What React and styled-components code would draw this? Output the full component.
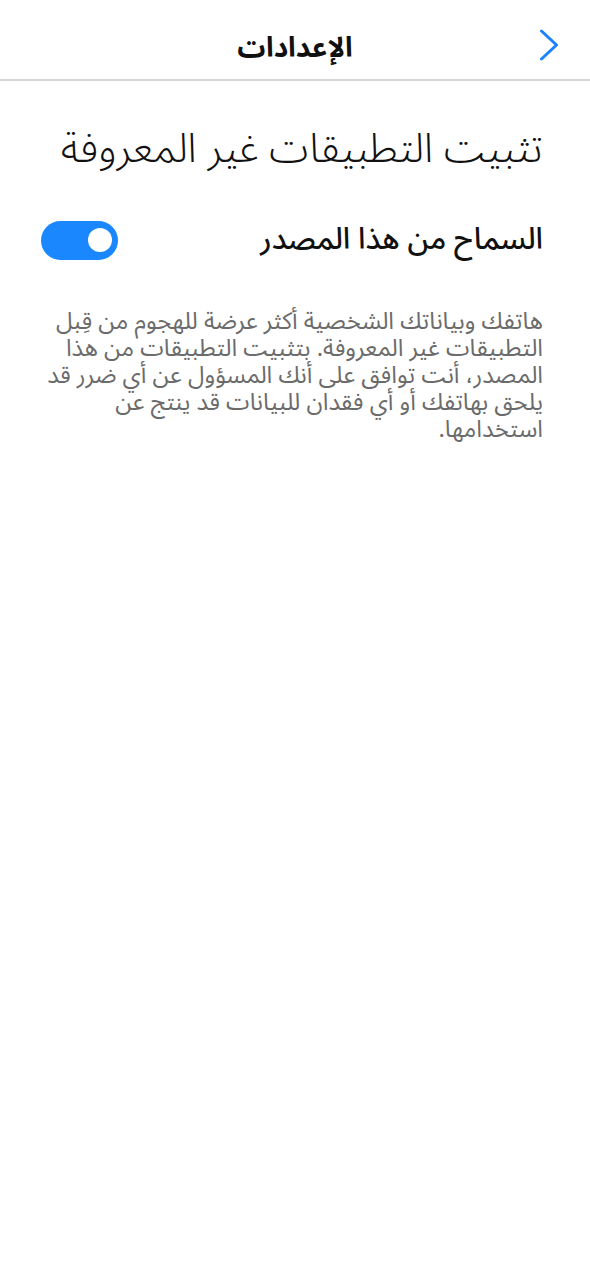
import React, { useState } from 'react';
import styled, { createGlobalStyle } from 'styled-components';

const GlobalStyle = createGlobalStyle`
  body {
    margin: 0;
    background: #ffffff;
    font-family: "Noto Sans Arabic", "Noto Sans Arabic UI", "Noto Sans", sans-serif;
  }
`;

const Page = styled.div`
  direction: rtl;
  width: 590px;
  min-height: 1280px;
  background: #ffffff;
`;

const Header = styled.header`
  position: relative;
  box-sizing: border-box;
  height: 81px;
  padding-top: 17px;
  display: flex;
  align-items: center;
  justify-content: center;
  border-bottom: 2px solid #d8d8d8;
`;

const HeaderTitle = styled.h1`
  margin: 0;
  font-size: 28px;
  font-weight: 700;
  color: #111111;
`;

const BackButton = styled.button`
  position: absolute;
  right: 23px;
  top: 27px;
  width: 36px;
  height: 36px;
  padding: 0;
  border: none;
  background: none;
  display: flex;
  align-items: center;
  justify-content: center;
  cursor: pointer;
`;

const Content = styled.main`
  padding: 40px 47px 0 47px;
`;

const Title = styled.h2`
  margin: 0;
  font-size: 41px;
  font-weight: 300;
  color: #111111;
  line-height: 57px;
`;

const Row = styled.div`
  margin-top: 41px;
  display: flex;
  align-items: center;
  justify-content: space-between;
`;

const RowLabel = styled.span`
  font-size: 30px;
  font-weight: 500;
  line-height: 42px;
  color: #111111;
`;

const Toggle = styled.button`
  position: relative;
  width: 77px;
  height: 39px;
  margin-left: -6px;
  border: none;
  border-radius: 20px;
  background: ${(p) => (p.$on ? '#1a87ff' : '#c8c8c8')};
  padding: 0;
  cursor: pointer;
`;

const Knob = styled.span`
  position: absolute;
  top: 7.5px;
  left: ${(p) => (p.$on ? '47px' : '6px')};
  width: 24px;
  height: 24px;
  border-radius: 50%;
  background: #ffffff;
`;

const Note = styled.p`
  margin: 47px 0 0 0;
  font-size: 23.8px;
  line-height: 27px;
  color: #6b6b6b;
`;

export default function App() {
  const [on, setOn] = useState(true);
  return (
    <Page>
      <GlobalStyle />
      <Header>
        <HeaderTitle>الإعدادات</HeaderTitle>
        <BackButton aria-label="رجوع">
          <svg width="20" height="32" viewBox="0 0 20 32" fill="none">
            <path d="M2.5 2 L17.5 16 L2.5 30" stroke="#1a82ff" strokeWidth="3" strokeLinecap="round" strokeLinejoin="round" />
          </svg>
        </BackButton>
      </Header>
      <Content>
        <Title>تثبيت التطبيقات غير المعروفة</Title>
        <Row>
          <RowLabel>السماح من هذا المصدر</RowLabel>
          <Toggle $on={on} onClick={() => setOn(!on)} aria-label="toggle">
            <Knob $on={on} />
          </Toggle>
        </Row>
        <Note>
          هاتفك وبياناتك الشخصية أكثر عرضة للهجوم من قِبل التطبيقات غير المعروفة. بتثبيت التطبيقات من هذا المصدر، أنت توافق على أنك المسؤول عن أي ضرر قد يلحق بهاتفك أو أي فقدان للبيانات قد ينتج عن استخدامها.
        </Note>
      </Content>
    </Page>
  );
}
